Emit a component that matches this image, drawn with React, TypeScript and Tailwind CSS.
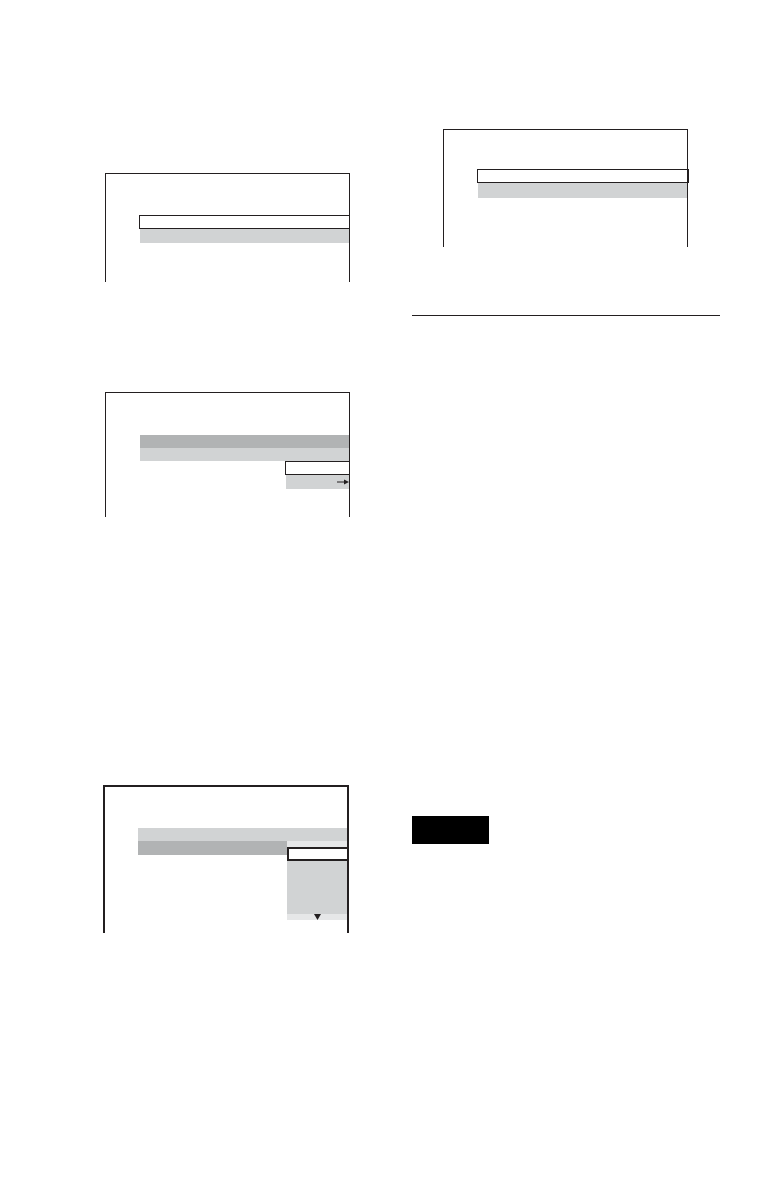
import React from "react";

function Arrow() {
  return (
    <svg width="12" height="6" viewBox="0 0 12 6" className="block">
      <line x1="0" y1="3" x2="8" y2="3" stroke="#231f20" strokeWidth="1" />
      <polygon points="7,0.5 12,3 7,5.5" fill="#231f20" />
    </svg>
  );
}

function Down() {
  return (
    <svg width="7" height="6" viewBox="0 0 7 6" className="block">
      <polygon points="0,0 7,0 3.5,6" fill="#231f20" />
    </svg>
  );
}

export default function App() {
  return (
    <div className="w-[767px] h-[1191px] bg-white flex font-['Liberation_Sans',sans-serif]">
      {/* Left column */}
      <div className="w-[383px] flex flex-col">
        {/* Box 1 */}
        <div className="ml-[105px] mt-[173px] w-[245px] h-[109px] border-x border-t border-[#231f20] pt-[41px] pl-[33px] flex flex-col">
          <div className="h-[14px] -mr-[1px] border border-[#231f20] bg-white" />
          <div className="h-[14px] ml-[1px] bg-[#d1d3d4]" />
        </div>

        {/* Box 2 */}
        <div className="ml-[105px] mt-[110px] w-[245px] h-[125px] border-x border-t border-[#231f20] pt-[42px] pl-[34px] flex flex-col">
          <div className="h-[13px] bg-[#b1b3b4]" />
          <div className="h-[13px] bg-[#d1d3d4]" />
          <div className="self-end -mr-[1px] w-[65px] h-[14px] border border-[#231f20] bg-white" />
          <div className="self-end w-[63px] h-[14px] bg-[#d1d3d4] flex items-center justify-end">
            <Arrow />
          </div>
        </div>

        {/* Box 3 */}
        <div className="ml-[103px] mt-[268px] w-[246px] h-[148px] border-x-2 border-t-2 border-[#231f20] pt-[41px] pl-[33px] flex flex-col">
          <div className="h-[13px] bg-[#d1d3d4]" />
          <div className="flex">
            <div className="flex-1 h-[14px] bg-[#b1b3b4]" />
            <div className="w-[60px] flex flex-col">
              <div className="h-[6px] bg-[#e6e7e8]" />
              <div className="h-[14px] border-2 border-r-0 border-[#231f20] bg-white" />
              <div className="h-[53px] bg-[#d1d3d4]" />
              <div className="h-[6px] bg-[#e6e7e8] flex justify-center items-center">
                <Down />
              </div>
            </div>
          </div>
        </div>
      </div>

      {/* Right column */}
      <div className="flex-1 flex flex-col">
        {/* Box 4 */}
        <div className="ml-[60px] mt-[129px] w-[245px] h-[118px] border-x border-t border-[#231f20] pt-[39px] pl-[33px] flex flex-col">
          <div className="h-[14px] -mr-[2px] border border-r-2 border-[#231f20] bg-white" />
          <div className="h-[15px] ml-[1px] bg-[#d1d3d4]" />
        </div>

        {/* Rule */}
        <div className="ml-[29px] mt-[68px] w-[308px] h-[1px] bg-[#231f20]" />

        {/* Black label */}
        <div className="ml-[29px] mt-[500px] w-[77px] h-[28px] bg-black" />
      </div>
    </div>
  );
}
